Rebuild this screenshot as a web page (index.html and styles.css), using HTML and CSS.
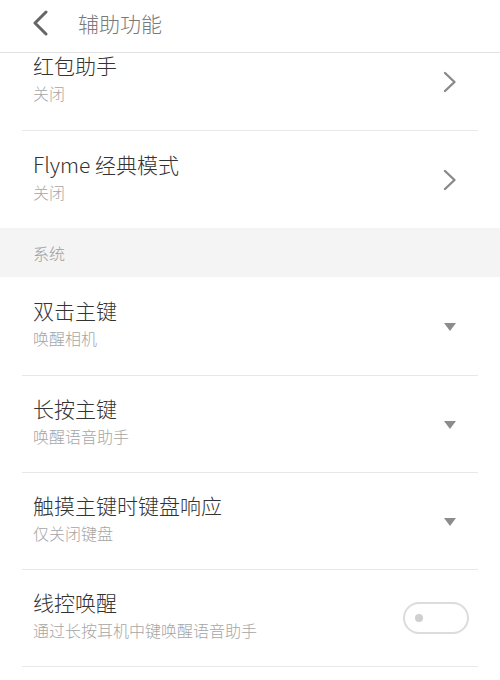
FILE: index.html
```html
<!DOCTYPE html>
<html lang="zh-CN">
<head>
<meta charset="utf-8">
<title>辅助功能</title>
<link rel="stylesheet" href="styles.css">
</head>
<body>
<div class="screen">
  <header class="topbar">
    <svg class="back" width="16" height="26" viewBox="0 0 16 26"><path d="M14 2 L3 13 L14 24" fill="none" stroke="#666" stroke-width="3" stroke-linecap="round" stroke-linejoin="round"/></svg>
    <h1 class="topbar-title">辅助功能</h1>
  </header>
  <main class="list">
    <div class="row">
      <div class="row-inner row-cut">
        <div class="row-text">
          <div class="row-title">红包助手</div>
          <div class="row-sub">关闭</div>
        </div>
        <svg class="chev" width="14" height="22" viewBox="0 0 14 22"><path d="M2 2 L11.5 11 L2 20" fill="none" stroke="#8a8a8a" stroke-width="2.4" stroke-linecap="round" stroke-linejoin="round"/></svg>
      </div>
    </div>
    <div class="row">
      <div class="row-inner no-line">
        <div class="row-text">
          <div class="row-title">Flyme 经典模式</div>
          <div class="row-sub">关闭</div>
        </div>
        <svg class="chev" width="14" height="22" viewBox="0 0 14 22"><path d="M2 2 L11.5 11 L2 20" fill="none" stroke="#8a8a8a" stroke-width="2.4" stroke-linecap="round" stroke-linejoin="round"/></svg>
      </div>
    </div>
    <div class="section">系统</div>
    <div class="group">
      <div class="row">
        <div class="row-inner">
          <div class="row-text">
            <div class="row-title">双击主键</div>
            <div class="row-sub">唤醒相机</div>
          </div>
          <span class="caret"></span>
        </div>
      </div>
      <div class="row">
        <div class="row-inner">
          <div class="row-text">
            <div class="row-title">长按主键</div>
            <div class="row-sub">唤醒语音助手</div>
          </div>
          <span class="caret"></span>
        </div>
      </div>
      <div class="row">
        <div class="row-inner">
          <div class="row-text">
            <div class="row-title">触摸主键时键盘响应</div>
            <div class="row-sub">仅关闭键盘</div>
          </div>
          <span class="caret"></span>
        </div>
      </div>
      <div class="row">
        <div class="row-inner">
          <div class="row-text">
            <div class="row-title">线控唤醒</div>
            <div class="row-sub">通过长按耳机中键唤醒语音助手</div>
          </div>
          <span class="switch"><span class="switch-dot"></span></span>
        </div>
      </div>
    </div>
  </main>
</div>
</body>
</html>
```

FILE: styles.css
```css
* { box-sizing: border-box; }
html, body {
  margin: 0;
  padding: 0;
  background: #fff;
}
body {
  font-family: "Noto Sans CJK SC", "Noto Sans", sans-serif;
  font-weight: 300;
  width: 500px;
  height: 680px;
  overflow: hidden;
}
.screen {
  width: 500px;
  height: 680px;
  display: flex;
  flex-direction: column;
  overflow: hidden;
}
.topbar {
  flex: 0 0 53px;
  height: 53px;
  display: flex;
  align-items: center;
  padding-left: 32px;
  padding-bottom: 7px;
  background: #fff;
  border-bottom: 1px solid #e2e2e2;
}
.back { display: block; }
.topbar-title {
  margin: 0 0 0 30px;
  font-size: 21px;
  font-weight: 300;
  color: #7a7a7a;
  line-height: 28px;
}
.list {
  flex: 1;
}
.row {
  padding: 0 22px;
}
.row-inner {
  height: 97px;
  display: flex;
  align-items: center;
  padding-left: 11px;
  border-bottom: 1px solid #e8e8e8;
}
.row-inner.row-cut {
  height: 78px;
  align-items: flex-end;
  padding-bottom: 21px;
}
.row-cut .chev {
  margin-bottom: 16px;
}
.row-inner.no-line { border-bottom: none; }
.group .row:first-child .row-inner { height: 99px; }
.row-text {
  flex: 1;
  display: flex;
  flex-direction: column;
  padding-bottom: 3px;
}
.row-title {
  font-size: 21px;
  line-height: 24px;
  margin-bottom: 3px;
  color: #333;
}
.row-sub {
  font-size: 16px;
  line-height: 26px;
  color: #a6a6a6;
}
.chev {
  display: block;
  margin-right: 21px;
}
.caret {
  width: 0;
  height: 0;
  border-left: 6.5px solid transparent;
  border-right: 6.5px solid transparent;
  border-top: 8px solid #8c8c8c;
  margin-right: 22px;
  margin-top: 2px;
}
.section {
  height: 49px;
  background: #f4f4f4;
  display: flex;
  align-items: center;
  padding-left: 33px;
  font-size: 16px;
  color: #9e9e9e;
}
.switch {
  width: 66px;
  height: 32px;
  border: 2px solid #dcdcdc;
  border-radius: 16px;
  margin-right: 9px;
  display: flex;
  align-items: center;
  padding-left: 10px;
}
.switch-dot {
  width: 8px;
  height: 8px;
  border-radius: 50%;
  background: #cfcfcf;
}
```
